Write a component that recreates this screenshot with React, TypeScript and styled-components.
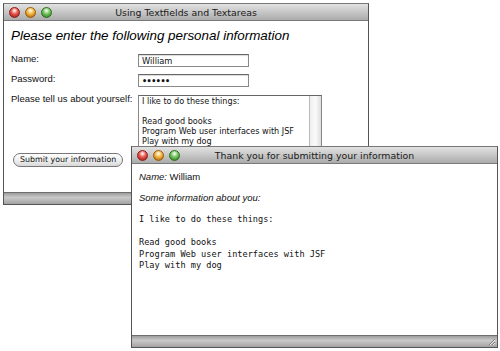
import React from "react";
import styled, { createGlobalStyle } from "styled-components";

const GlobalStyle = createGlobalStyle`
  body {
    margin: 0;
    background: #fff;
  }
`;

const LUCIDA = `"DejaVu Sans", "Liberation Sans", sans-serif`;
const HELV = `"Liberation Sans", Arial, sans-serif`;

const Desktop = styled.div`
  position: relative;
  width: 500px;
  height: 351px;
  overflow: hidden;
  background: #fff;
  font-family: ${LUCIDA};
  color: #111;
`;

// windows sit on a free desktop, so they are placed by coordinates
const Window = styled.div<{ $x: number; $y: number; $w: number; $h: number }>`
  position: absolute;
  left: ${({ $x }) => $x}px;
  top: ${({ $y }) => $y}px;
  width: ${({ $w }) => $w}px;
  height: ${({ $h }) => $h}px;
  box-sizing: border-box;
  display: flex;
  flex-direction: column;

  background: #fff;
  border: 1px solid #555;
  border-top-color: #777;
`;

const TitleBar = styled.div`
  display: grid;
  grid-template-columns: 56px 1fr 56px;
  align-items: center;
  height: 16px;
  flex-shrink: 0;

  background: linear-gradient(#e2e2e2, #c4c4c4 55%, #ababab);
  border-bottom: 1px solid #7a7a7a;
`;

const Lights = styled.div`
  display: flex;
  gap: 5px;
  padding-left: 5px;
`;

const Light = styled.span<{ $color: string; $rim: string }>`
  width: 11px;
  height: 11px;
  border-radius: 50%;
  box-sizing: border-box;
  border: 1px solid ${({ $rim }) => $rim};
  background: radial-gradient(
    circle at 50% 30%,
    #fff 0,
    ${({ $color }) => $color} 45%,
    ${({ $rim }) => $rim} 100%
  );
`;

const Title = styled.div`
  text-align: center;
  font-size: 9.4px;
  color: #1a1a1a;
  white-space: nowrap;
`;

const StatusBar = styled.div`
  position: relative;
  height: 11px;
  flex-shrink: 0;
  margin-top: auto;

  background: linear-gradient(#9c9c9c, #c9c9c9 40%, #bdbdbd 60%, #a2a2a2);
  border-top: 1px solid #6e6e6e;
`;

const Grip = styled.svg`
  position: absolute;
  right: 1px;
  bottom: 1px;
`;

const FormBody = styled.div`
  display: flex;
  flex-direction: column;
  padding: 6px 7px 0;
`;

const Heading = styled.h1`
  margin: 0;
  font-family: ${HELV};
  font-style: italic;
  font-weight: normal;
  font-size: 13.4px;
  line-height: 18px;
  color: #000;
`;

const FormGrid = styled.div`
  display: grid;
  grid-template-columns: 127px auto;
  row-gap: 7px;
  margin-top: 9px;
  align-items: start;
`;

const Label = styled.label`
  font-family: ${HELV};
  font-size: 9.5px;
  line-height: 10px;
  color: #111;
  white-space: nowrap;
`;

const Field = styled.div`
  box-sizing: border-box;
  width: 111px;
  height: 13px;
  padding: 0 3px;
  border: 1px solid #888;
  border-top-color: #666;
  box-shadow: inset 0 1px 1px rgba(0, 0, 0, 0.15);
  font-size: 8.3px;
  line-height: 12px;
  color: #111;
`;

const Dots = styled.span`
  font-size: 8px;
  letter-spacing: -0.5px;
  font-weight: bold;
`;

const TextArea = styled.div`
  display: flex;
  width: 184px;
  height: 54px;
  margin-top: 1px;
  box-sizing: border-box;
  border: 1px solid #888;
  border-top-color: #666;
  overflow: hidden;
`;

const AreaText = styled.div`
  flex: 1;
  padding: 0 3px;
  font-size: 8.1px;
  line-height: 10px;
  white-space: pre;
  color: #111;
`;

const ScrollTrack = styled.div`
  width: 11px;
  border-left: 1px solid #bbb;
  background: linear-gradient(90deg, #eee, #fafafa 50%, #ddd);
`;

const SubmitButton = styled.button`
  align-self: flex-start;
  margin: 4px 0 0 2px;
  height: 14px;
  padding: 0 6px;
  border: 1px solid #777;
  border-radius: 7px;
  background: linear-gradient(#fff, #f0f0f0 50%, #d8d8d8);
  font-family: ${LUCIDA};
  font-size: 7.9px;
  line-height: 12px;
  color: #111;
`;

const ResultBody = styled.div`
  display: flex;
  flex-direction: column;
  gap: 9px;
  padding: 7px 7px 0;
  font-family: ${HELV};
  font-size: 9.5px;
  line-height: 12px;
  color: #111;
`;

const Line = styled.div``;

const Em = styled.i``;

const Mono = styled.pre`
  margin: 1px 0 0;
  font-family: "DejaVu Sans Mono", "Liberation Mono", monospace;
  font-size: 8.6px;
  line-height: 11.5px;
  color: #111;
`;

const TrafficLights = () => (
  <Lights>
    <Light $color="#e8524a" $rim="#8e1c16" />
    <Light $color="#f2b43a" $rim="#9a5a08" />
    <Light $color="#6fc45a" $rim="#2f6e1e" />
  </Lights>
);

const about = "I like to do these things:\n\nRead good books\nProgram Web user interfaces with JSF\nPlay with my dog";

export default function App() {
  return (
    <Desktop>
      <GlobalStyle />
      <Window $x={3} $y={3} $w={366} $h={202}>
        <TitleBar>
          <TrafficLights />
          <Title>Using Textfields and Textareas</Title>
        </TitleBar>
        <FormBody>
          <Heading>Please enter the following personal information</Heading>
          <FormGrid>
            <Label>Name:</Label>
            <Field>William</Field>
            <Label>Password:</Label>
            <Field>
              <Dots>••••••</Dots>
            </Field>
            <Label>Please tell us about yourself:</Label>
            <TextArea>
              <AreaText>{about}</AreaText>
              <ScrollTrack />
            </TextArea>
          </FormGrid>
          <SubmitButton>Submit your information</SubmitButton>
        </FormBody>
        <StatusBar />
      </Window>

      <Window $x={131} $y={146} $w={367} $h={202}>
        <TitleBar>
          <TrafficLights />
          <Title>Thank you for submitting your information</Title>
        </TitleBar>
        <ResultBody>
          <Line>
            <Em>Name:</Em> William
          </Line>
          <Line>
            <Em>Some information about you:</Em>
          </Line>
          <Mono>{about}</Mono>
        </ResultBody>
        <StatusBar>
          <Grip width="9" height="9" viewBox="0 0 9 9">
            <path d="M8 2 L2 8 M8 5 L5 8" stroke="#777" strokeWidth="1" />
            <path d="M8 3 L3 8 M8 6 L6 8" stroke="#eee" strokeWidth="1" />
          </Grip>
        </StatusBar>
      </Window>
    </Desktop>
  );
}
